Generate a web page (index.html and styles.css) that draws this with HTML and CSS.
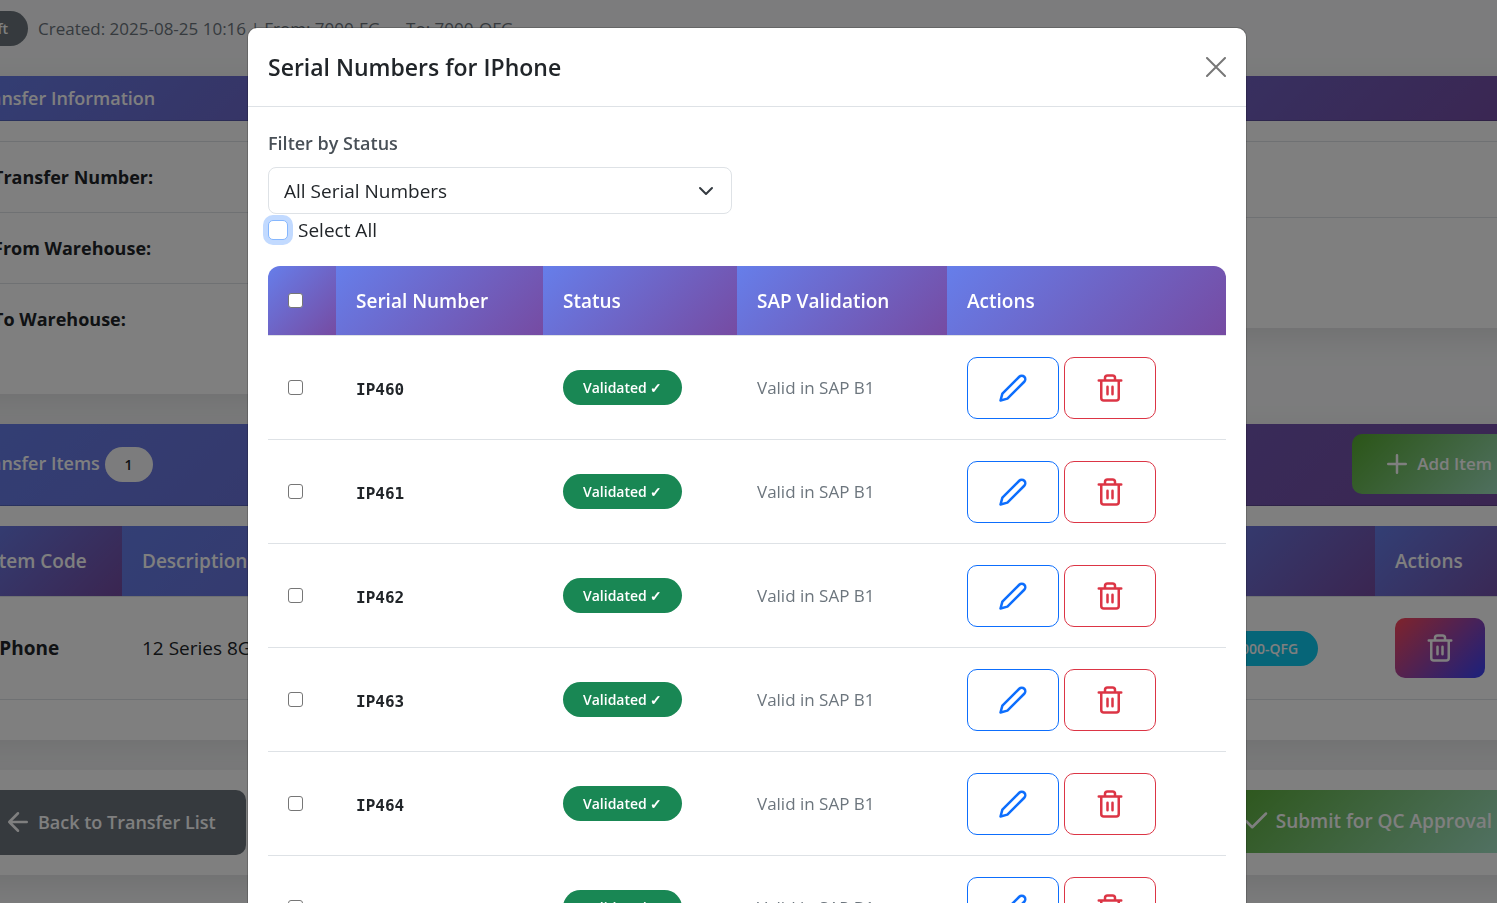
FILE: index.html
```html
<!DOCTYPE html>
<html lang="en">
<head>
<meta charset="utf-8">
<title>Serial Numbers for IPhone</title>
<link rel="stylesheet" href="styles.css">
</head>
<body>
<svg class="sprite" aria-hidden="true">
  <symbol id="pencil" viewBox="0 0 24 24"><path d="M17 3a2.828 2.828 0 1 1 4 4L7.5 20.5 2 22l1.5-5.5L17 3z"/></symbol>
  <symbol id="trash" viewBox="0 0 24 24"><path d="M3 6h18M19 6v14a2 2 0 0 1-2 2H7a2 2 0 0 1-2-2V6m3 0V4a2 2 0 0 1 2-2h4a2 2 0 0 1 2 2v2M10 11v6M14 11v6"/></symbol>
  <symbol id="plus" viewBox="0 0 24 24"><path d="M12 5v14M5 12h14"/></symbol>
  <symbol id="arrow" viewBox="0 0 24 24"><path d="M19 12H5M12 19l-7-7 7-7"/></symbol>
  <symbol id="check" viewBox="0 0 24 24"><path d="M20 6 9 17l-5-5"/></symbol>
</svg>

<main class="page">
  <div class="page-meta">
    <span class="badge badge-draft">Draft</span>
    <span class="meta-text">Created: 2025-08-25 10:16 | From: 7000-FG → To: 7000-QFG</span>
  </div>

  <div class="info-grid">
    <section class="card">
      <h2 class="card-header">Transfer Information</h2>
      <div class="card-body">
        <table class="info-table">
          <tr><th scope="row">Transfer Number:</th></tr>
          <tr><th scope="row">From Warehouse:</th></tr>
          <tr><th scope="row">To Warehouse:</th></tr>
        </table>
      </div>
    </section>
    <section class="card">
      <div class="card-header"></div>
      <div class="card-body">
        <table class="info-table info-status">
          <tr class="tall"><td></td></tr>
          <tr><td></td></tr>
        </table>
      </div>
    </section>
  </div>

  <section class="card">
    <div class="card-header items-header">
      <h2 class="items-title">Transfer Items <span class="badge badge-count">1</span></h2>
      <button class="btn btn-add" type="button"><svg class="icon"><use href="#plus"/></svg>Add Item</button>
    </div>
    <div class="card-body">
      <table class="data-table items-table">
        <colgroup><col class="c-code"><col><col class="c-to"><col class="c-act"></colgroup>
        <thead><tr><th>Item Code</th><th>Description</th><th></th><th>Actions</th></tr></thead>
        <tbody><tr>
          <td class="strong">IPhone</td><td>12 Series 8GB</td>
          <td><span class="badge badge-info">7000-QFG</span></td>
          <td><button class="btn btn-remove" type="button" aria-label="Remove item"><svg class="icon"><use href="#trash"/></svg></button></td>
        </tr></tbody>
      </table>
    </div>
  </section>

  <section class="card card-actions">
    <a class="btn btn-back" href="#"><svg class="icon"><use href="#arrow"/></svg>Back to Transfer List</a>
    <button class="btn btn-submit" type="button"><svg class="icon"><use href="#check"/></svg>Submit for QC Approval</button>
  </section>
</main>

<div class="overlay">
  <div class="modal" role="dialog" aria-modal="true" aria-labelledby="modal-title">
    <header class="modal-header">
      <h1 class="modal-title" id="modal-title">Serial Numbers for IPhone</h1>
      <button class="close" type="button" aria-label="Close"><svg viewBox="0 0 20 20"><path d="M1 1l18 18M19 1 1 19"/></svg></button>
    </header>
    <div class="modal-body">
      <div class="filter">
        <label class="filter-label" for="status">Filter by Status</label>
        <select class="select" id="status"><option>All Serial Numbers</option></select>
      </div>
      <div class="select-all">
        <input class="check-lg" type="checkbox" id="all"><label for="all">Select All</label>
      </div>
      <table class="data-table serials">
        <colgroup><col class="s-check"><col class="s-num"><col class="s-status"><col class="s-sap"><col></colgroup>
        <thead><tr>
          <th><input class="check" type="checkbox" aria-label="Select all rows"></th>
          <th>Serial Number</th><th>Status</th><th>SAP Validation</th><th>Actions</th>
        </tr></thead>
        <tbody>
          <tr>
            <td><input class="check" type="checkbox" aria-label="Select IP460"></td><td class="code">IP460</td>
            <td><span class="badge badge-ok">Validated ✓</span></td><td class="muted">Valid in SAP B1</td>
            <td><div class="row-actions"><button class="btn-outline edit" type="button" aria-label="Edit"><svg class="icon"><use href="#pencil"/></svg></button><button class="btn-outline delete" type="button" aria-label="Delete"><svg class="icon"><use href="#trash"/></svg></button></div></td>
          </tr>
          <tr>
            <td><input class="check" type="checkbox" aria-label="Select IP461"></td><td class="code">IP461</td>
            <td><span class="badge badge-ok">Validated ✓</span></td><td class="muted">Valid in SAP B1</td>
            <td><div class="row-actions"><button class="btn-outline edit" type="button" aria-label="Edit"><svg class="icon"><use href="#pencil"/></svg></button><button class="btn-outline delete" type="button" aria-label="Delete"><svg class="icon"><use href="#trash"/></svg></button></div></td>
          </tr>
          <tr>
            <td><input class="check" type="checkbox" aria-label="Select IP462"></td><td class="code">IP462</td>
            <td><span class="badge badge-ok">Validated ✓</span></td><td class="muted">Valid in SAP B1</td>
            <td><div class="row-actions"><button class="btn-outline edit" type="button" aria-label="Edit"><svg class="icon"><use href="#pencil"/></svg></button><button class="btn-outline delete" type="button" aria-label="Delete"><svg class="icon"><use href="#trash"/></svg></button></div></td>
          </tr>
          <tr>
            <td><input class="check" type="checkbox" aria-label="Select IP463"></td><td class="code">IP463</td>
            <td><span class="badge badge-ok">Validated ✓</span></td><td class="muted">Valid in SAP B1</td>
            <td><div class="row-actions"><button class="btn-outline edit" type="button" aria-label="Edit"><svg class="icon"><use href="#pencil"/></svg></button><button class="btn-outline delete" type="button" aria-label="Delete"><svg class="icon"><use href="#trash"/></svg></button></div></td>
          </tr>
          <tr>
            <td><input class="check" type="checkbox" aria-label="Select IP464"></td><td class="code">IP464</td>
            <td><span class="badge badge-ok">Validated ✓</span></td><td class="muted">Valid in SAP B1</td>
            <td><div class="row-actions"><button class="btn-outline edit" type="button" aria-label="Edit"><svg class="icon"><use href="#pencil"/></svg></button><button class="btn-outline delete" type="button" aria-label="Delete"><svg class="icon"><use href="#trash"/></svg></button></div></td>
          </tr>
          <tr>
            <td><input class="check" type="checkbox" aria-label="Select IP465"></td><td class="code">IP465</td>
            <td><span class="badge badge-ok">Validated ✓</span></td><td class="muted">Valid in SAP B1</td>
            <td><div class="row-actions"><button class="btn-outline edit" type="button" aria-label="Edit"><svg class="icon"><use href="#pencil"/></svg></button><button class="btn-outline delete" type="button" aria-label="Delete"><svg class="icon"><use href="#trash"/></svg></button></div></td>
          </tr>
        </tbody>
      </table>
    </div>
  </div>
</div>
</body>
</html>
```

FILE: styles.css
```css
:root {
  --brand: linear-gradient(135deg, #667eea 0%, #764ba2 100%);
  --line: #dee2e6;
  --ink: #212529;
  --muted: #6c757d;
}
* { box-sizing: border-box; }
html { height: 100%; overflow: hidden; }
body {
  margin: 0;
  height: 100%;
  overflow: hidden;
  background: #f8f9fa;
  color: var(--ink);
  font: 19px/30px "Open Sans", "Noto Sans", sans-serif;
}
h1, h2 { margin: 0; font-weight: 600; }
button, select { font: inherit; }
table { border-collapse: separate; border-spacing: 0; width: 100%; }
.sprite { display: none; }
.icon {
  width: 30px;
  height: 30px;
  flex: none;
  fill: none;
  stroke: currentColor;
  stroke-width: 2;
  stroke-linecap: round;
  stroke-linejoin: round;
}

.page { margin: 0 -45px 0 -47px; display: flex; flex-direction: column; gap: 30px; }
.page-meta { display: flex; align-items: center; gap: 10px; padding-top: 11px; color: var(--muted); font-size: 17px; white-space: nowrap; }
.badge {
  display: inline-block;
  padding: 0 20px;
  border-radius: 18px;
  color: #fff;
  font-size: 14px;
  font-weight: 600;
  line-height: 35px;
  white-space: nowrap;
  vertical-align: middle;
}
.badge-draft { background: var(--muted); }
.badge-count { background: #f8f9fa; color: var(--ink); }
.badge-info { background: #0dcaf0; }
.badge-ok { background: #198754; }

.card { background: #fff; box-shadow: 0 10px 30px rgba(0, 0, 0, .1); }
.card-header {
  min-height: 45px;
  padding: 0 20px;
  background: var(--brand);
  border-bottom: 1px solid rgba(0, 0, 0, .18);
  color: #fff;
  font-size: 18px;
  line-height: 44px;
}
.card-body { padding: 20px 20px 40px; }
.info-grid { display: grid; grid-template-columns: 1fr 1fr; gap: 30px; align-items: start; }
.info-table th, .info-table td { height: 71px; padding: 0 20px; border-top: 1px solid var(--line); text-align: left; font-size: 18px; font-weight: 700; }
.info-table .tall td { height: 76px; }
.items-header { display: flex; align-items: center; justify-content: space-between; padding: 10px 20px 11px; }
.items-title { font-size: 18px; line-height: 35px; }

.btn {
  display: inline-flex;
  align-items: center;
  justify-content: center;
  gap: 5px;
  border: 0;
  border-radius: 10px;
  padding: 15px 30px;
  color: #fff;
  font-weight: 600;
  line-height: 30px;
  text-decoration: none;
  white-space: nowrap;
}
.btn-add { background: linear-gradient(135deg, #56ab2f, #a8e6cf); font-size: 17px; }
.btn-submit { background: linear-gradient(135deg, #56ab2f, #a8e6cf); padding: 16px 30px 17px; }
.btn-back { background: var(--muted); padding: 17px 30px 18px; font-size: 18px; }
.btn-remove { background: linear-gradient(135deg, #ff4757, #3742fa); vertical-align: middle; }
.card-actions { display: flex; justify-content: space-between; align-items: flex-start; padding: 20px; }

.data-table { table-layout: fixed; }
.data-table th, .data-table td { padding: 0 20px; border-bottom: 1px solid var(--line); text-align: left; vertical-align: middle; }
.data-table th { height: 71px; background: var(--brand) padding-box; color: #fff; font-weight: 600; }
.items-table td { height: 103px; }
.c-code { width: 149px; }
.c-to { width: 182px; }
.c-act { width: 147px; }
.strong { font-weight: 700; }

.overlay { position: fixed; inset: 0; overflow: hidden; padding: 27px 3px 0 0; background: rgba(0, 0, 0, .5); }
.modal {
  max-width: 1000px;
  margin: 0 auto;
  border: 1px solid rgba(0, 0, 0, .18);
  border-radius: 10px;
  background: #fff;
  background-clip: padding-box;
}
.modal-header { display: flex; align-items: center; justify-content: space-between; padding: 20px; border-bottom: 1px solid var(--line); }
.modal-title { font-size: 23px; line-height: 38px; }
.close { display: flex; padding: 0; border: 0; background: none; }
.close svg { width: 20px; height: 20px; fill: none; stroke: #777; stroke-width: 2; stroke-linecap: round; }
.modal-body { padding: 20px; }
.filter { display: flex; flex-direction: column; width: 50%; padding-right: 15px; }
.filter-label { margin-bottom: 8px; line-height: 32px; color: #495057; font-size: 18px; font-weight: 600; }
.select {
  appearance: none;
  height: 47px;
  padding: 0 15px;
  border: 1px solid var(--line);
  border-radius: 8px;
  color: var(--ink);
  background: #fff url("data:image/svg+xml,%3Csvg xmlns='http://www.w3.org/2000/svg' viewBox='0 0 16 16'%3E%3Cpath fill='none' stroke='%23343a40' stroke-linecap='round' stroke-linejoin='round' stroke-width='2' d='m2 5 6 6 6-6'/%3E%3C/svg%3E") no-repeat right 17px center / 16px;
}
.select-all { display: flex; align-items: center; gap: 10px; height: 32px; margin-bottom: 20px; }
.check-lg {
  appearance: none;
  width: 20px;
  height: 20px;
  margin: 0;
  border: 1px solid #86b7fe;
  border-radius: 5px;
  background: #fff;
  box-shadow: 0 0 0 5px #c2daff;
}
.check { display: block; appearance: none; width: 15px; height: 15px; margin: 0; border: 1px solid #767676; border-radius: 3px; background: #fff; }
.serials th { height: 70px; }
.serials th:first-child { border-top-left-radius: 12px; }
.serials th:last-child { border-top-right-radius: 12px; }
.serials td { height: 104px; }
.s-check { width: 68px; }
.s-num { width: 207px; }
.s-status { width: 194px; }
.s-sap { width: 210px; }
.serials .code { padding-top: 4px; font: 700 16px/30px "DejaVu Sans Mono", monospace; }
.muted { color: var(--muted); font-size: 17px; }
.row-actions { display: flex; gap: 5px; }
.btn-outline {
  display: flex;
  align-items: center;
  justify-content: center;
  padding: 15px 30px;
  border: 1px solid currentColor;
  border-radius: 10px;
  background: #fff;
}
.edit { color: #0d6efd; }
.delete { color: #dc3545; }
```
